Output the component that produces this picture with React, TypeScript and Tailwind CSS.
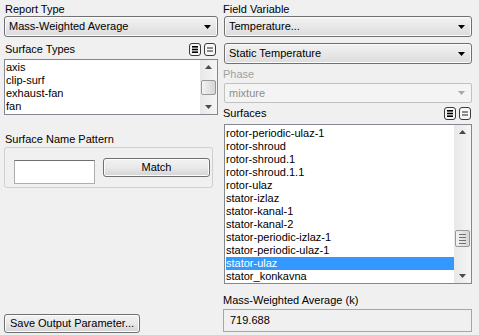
import React from 'react'

const surfaceTypes = ['axis', 'clip-surf', 'exhaust-fan', 'fan']

const surfaces = [
  'rotor-periodic-ulaz-1',
  'rotor-shroud',
  'rotor-shroud.1',
  'rotor-shroud.1.1',
  'rotor-ulaz',
  'stator-izlaz',
  'stator-kanal-1',
  'stator-kanal-2',
  'stator-periodic-izlaz-1',
  'stator-periodic-ulaz-1',
  'stator-ulaz',
  'stator_konkavna',
]

function Arrow({ disabled = false }: { disabled?: boolean }) {
  return (
    <svg width="7" height="4" viewBox="0 0 7 4" className="shrink-0">
      <polygon points="0,0 7,0 3.5,4" fill={disabled ? '#a8a8a8' : '#000'} />
    </svg>
  )
}

function Dropdown({ value, disabled = false }: { value: string; disabled?: boolean }) {
  if (disabled) {
    return (
      <div className="flex h-[20px] items-center justify-between rounded-[2px] border border-[#c2c2c2] bg-[#f4f4f4] pl-[4px] pr-[6px] text-[#8d8d8d]">
        <span>{value}</span>
        <Arrow disabled />
      </div>
    )
  }
  return (
    <div className="flex h-[21px] items-center justify-between rounded-[3px] border border-[#707070] bg-gradient-to-b from-[#f3f3f3] to-[#dcdcdc] pl-[4px] pr-[6px] shadow-[inset_0_0_0_1px_#fbfbfb]">
      <span>{value}</span>
      <Arrow />
    </div>
  )
}

function SelectIcons() {
  return (
    <div className="flex gap-[3px]">
      <svg width="12" height="13" viewBox="0 0 12 13">
        <rect x="0.5" y="0.5" width="11" height="12" rx="2.5" fill="#f7f7f7" stroke="#3a3a3a" />
        <rect x="3" y="3" width="6" height="1.6" fill="#000" />
        <rect x="3" y="5.7" width="6" height="1.6" fill="#000" />
        <rect x="3" y="8.4" width="6" height="1.6" fill="#000" />
      </svg>
      <svg width="12" height="13" viewBox="0 0 12 13">
        <rect x="0.5" y="0.5" width="11" height="12" rx="2.5" fill="#f7f7f7" stroke="#3a3a3a" />
        <rect x="3" y="4.5" width="6" height="1" fill="#222" />
        <rect x="3" y="7.5" width="6" height="1" fill="#222" />
      </svg>
    </div>
  )
}

function ScrollBar({ thumbTop, thumbHeight, grip = false }: { thumbTop: number; thumbHeight: number; grip?: boolean }) {
  return (
    <div className="relative flex w-[17px] shrink-0 flex-col items-center justify-between bg-gradient-to-r from-[#e8e8e8] to-[#f5f5f5] py-[5px]">
      <svg width="7" height="4" viewBox="0 0 7 4">
        <polygon points="0,4 7,4 3.5,0" fill="#4a4a4a" />
      </svg>
      <div
        className="absolute left-[1px] flex w-[15px] flex-col items-center justify-center gap-[2px] rounded-[2px] border border-[#979797] bg-gradient-to-r from-[#f2f2f2] to-[#d6d6d6]"
        style={{ top: thumbTop, height: thumbHeight }}
      >
        {grip && (
          <>
            <div className="h-px w-[7px] bg-[#707070]" />
            <div className="h-px w-[7px] bg-[#707070]" />
            <div className="h-px w-[7px] bg-[#707070]" />
            <div className="h-px w-[7px] bg-[#707070]" />
          </>
        )}
      </div>
      <svg width="7" height="4" viewBox="0 0 7 4">
        <polygon points="0,0 7,0 3.5,4" fill="#4a4a4a" />
      </svg>
    </div>
  )
}

function Button({ label, className = '' }: { label: string; className?: string }) {
  return (
    <div
      className={
        'flex h-[19px] items-center justify-center whitespace-nowrap rounded-[3px] border border-[#707070] bg-gradient-to-b from-[#f2f2f2] via-[#e9e9e9] to-[#d4d4d4] shadow-[inset_0_0_0_1px_#fcfcfc] ' +
        className
      }
    >
      {label}
    </div>
  )
}

export default function App() {
  return (
    <div
      className="flex h-[335px] w-[479px] bg-[#f0f0f0] text-[11px] leading-[13px] text-black"
      style={{ fontFamily: '"Liberation Sans", Arial, sans-serif' }}
    >
      {/* left column */}
      <div className="flex w-[218px] flex-col pl-[4px] pt-[3px] pb-[2px]">
        <div className="h-[13px] pl-[1px]">Report Type</div>
        <Dropdown value="Mass-Weighted Average" />

        <div className="mt-[6px] flex h-[13px] items-center justify-between pl-[1px] pr-[2px]">
          <span>Surface Types</span>
          <SelectIcons />
        </div>
        <div className="mt-[3px] flex h-[56px] w-[214px] border border-[#828790] bg-white">
          <div className="flex-1 pt-[1px] pl-[1px]">
            {surfaceTypes.map((s) => (
              <div key={s} className="h-[13px]">
                {s}
              </div>
            ))}
          </div>
          <ScrollBar thumbTop={20} thumbHeight={15} />
        </div>

        <div className="mt-[18px] h-[13px] pl-[1px]">Surface Name Pattern</div>
        <div className="mt-[1px] flex h-[41px] w-[209px] items-center gap-[8px] rounded-[3px] border border-[#d0d0d0] pl-[9px]">
          <div className="mt-[9px] h-[24px] w-[81px] border border-[#abadb3] border-t-[#707070] bg-white" />
          <Button label="Match" className="w-[107px]" />
        </div>

        <Button label="Save Output Parameter..." className="mt-auto w-[136px]" />
      </div>

      {/* right column */}
      <div className="flex w-[254px] flex-col pl-[6px] pt-[3px]">
        <div className="-ml-[1px] h-[13px]">Field Variable</div>
        <Dropdown value="Temperature..." />
        <div className="mt-[6px]">
          <Dropdown value="Static Temperature" />
        </div>
        <div className="-ml-[1px] mt-[4px] h-[13px] text-[#a0a0a0]">Phase</div>
        <div className="mt-[2px]">
          <Dropdown value="mixture" disabled />
        </div>

        <div className="-ml-[1px] mt-[4px] flex h-[13px] items-center justify-between pr-[1px]">
          <span>Surfaces</span>
          <SelectIcons />
        </div>
        <div className="mt-[4px] flex h-[160px] border border-[#828790] bg-white">
          <div className="flex-1 pt-[2px] pl-[1px]">
            {surfaces.map((s) => (
              <div
                key={s}
                className={
                  s === 'stator-ulaz' ? 'h-[13px] bg-[#3399ff] text-white' : 'h-[13px]'
                }
              >
                {s}
              </div>
            ))}
          </div>
          <ScrollBar thumbTop={105} thumbHeight={17} grip />
        </div>

        <div className="-ml-[1px] mt-[10px] h-[13px]">Mass-Weighted Average (k)</div>
        <div className="-ml-[1px] mt-[2px] flex h-[23px] items-center border border-[#a6a6a6] bg-[#f0f0f0] pl-[6px]">
          719.688
        </div>
      </div>
    </div>
  )
}
